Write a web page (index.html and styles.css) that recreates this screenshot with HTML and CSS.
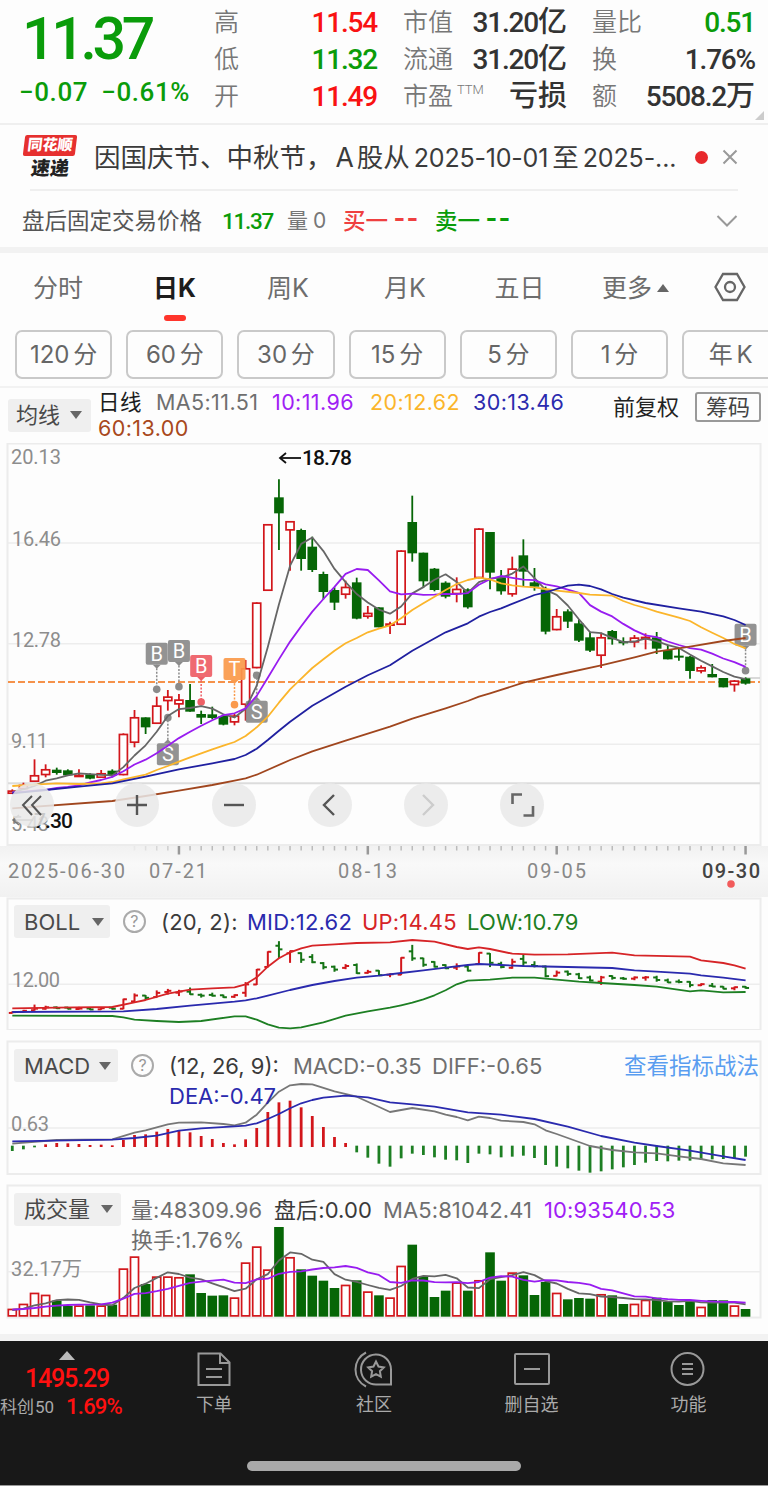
FILE: index.html
```html
<!DOCTYPE html>
<html lang="zh-CN">
<head>
  <meta charset="UTF-8" />
  <meta name="viewport" content="width=device-width, initial-scale=1.0" />
  <title>日K 11.37</title>
  <link rel="stylesheet" href="styles.css">
</head>
<body>
  <header class="quote">
    <div class="quote-main">
      <div class="price">11.37</div>
      <div class="change"><span>−0.07</span><span>−0.61%</span></div>
    </div>
    <dl class="stats stats-a">
      <dt>高</dt><dd class="up">11.54</dd>
      <dt>低</dt><dd class="down">11.32</dd>
      <dt>开</dt><dd class="up">11.49</dd>
    </dl>
    <dl class="stats stats-b">
      <dt>市值</dt><dd>31.20<b>亿</b></dd>
      <dt>流通</dt><dd>31.20<b>亿</b></dd>
      <dt>市盈<sup>TTM</sup></dt><dd><b>亏损</b></dd>
    </dl>
    <dl class="stats stats-c">
      <dt>量比</dt><dd class="down">0.51</dd>
      <dt>换</dt><dd>1.76%</dd>
      <dt>额</dt><dd>5508.2<b>万</b></dd>
    </dl>
    <i class="corner"></i>
  </header>

  <div class="notice">
    <div class="logo"><span class="logo-top">同花顺</span><span class="logo-bottom">速递</span></div>
    <p>因国庆节、中秋节，<span class="n-a">A</span>股从<span class="n-d">2025-10-01</span>至<span class="n-e">2025-...</span></p>
    <i class="dot"></i>
    <svg class="close" viewBox="0 0 16 16"><path d="M1.5 1.5l13 13M14.5 1.5l-13 13" /></svg>
  </div>

  <div class="after-hours">
    <span class="ah-label">盘后固定交易价格</span>
    <span class="ah-price">11.37</span>
    <span class="ah-vol">量 0</span>
    <span class="ah-buy">买一 <em>--</em></span>
    <span class="ah-sell">卖一 <em>--</em></span>
    <svg class="chevron" viewBox="0 0 22 14"><path d="M1.5 2l9.5 9.5L20.500 2" /></svg>
  </div>

  <nav class="tabs">
    <a>分时</a>
    <a class="active">日K</a>
    <a>周K</a>
    <a>月K</a>
    <a>五日</a>
    <a class="more">更多<i class="tri-up"></i></a>
    <svg class="gear" viewBox="0 0 32 30"><path d="M9 2h14l7.500 13L23 28H9L1.500 15z" /><circle cx="16" cy="15" r="5" /></svg>
  </nav>

  <div class="periods">
    <span>120 分</span><span>60 分</span><span>30 分</span><span>15 分</span><span>5 分</span><span>1 分</span><span class="year">年 K</span>
  </div>

  <div class="ma-bar">
    <button class="picker">均线<i class="tri-down"></i></button>
    <div class="ma-values">
      <span class="c-black">日线</span>
      <span class="c-gray">MA5:11.51</span>
      <span class="c-purple">10:11.96</span>
      <span class="c-yellow">20:12.62</span>
      <span class="c-blue">30:13.46</span>
      <span class="c-brown">60:13.00</span>
    </div>
    <span class="adjust">前复权</span>
    <button class="chips">筹码</button>
  </div>

  <main>
    <section class="kline">
      <svg id="kline" viewBox="0 3 768 403"></svg>
      <div class="tools">
        <button><svg viewBox="0 0 44 44"><path class="thin" d="M22 13L13 22l9 10M31 13L22 22l9 10" /></svg></button>
        <button><svg viewBox="0 0 44 44"><path d="M12 22h20M22 12v20" /></svg></button>
        <button><svg viewBox="0 0 44 44"><path d="M12 22h20" /></svg></button>
        <button><svg viewBox="0 0 44 44"><path d="M26 12L16 22l10 10" /></svg></button>
        <button class="disabled"><svg viewBox="0 0 44 44"><path d="M19 12l10 10-10 10" /></svg></button>
        <button><svg viewBox="0 0 44 44"><path class="thick" d="M12.500 21v-9.500H22M33 23v9.500H23.500" /></svg></button>
      </div>
    </section>
    <svg id="axis" viewBox="0 406 768 51"></svg>

    <section class="panel boll">
      <svg id="boll" class="plot" viewBox="0 0 768 135"></svg>
      <div class="legend">
        <button class="picker">BOLL<i class="tri-down"></i></button>
        <i class="help">?</i>
        <span class="c-dark">(20, 2):</span>
        <span class="c-blue">MID:12.62</span>
        <span class="c-red">UP:14.45</span>
        <span class="c-green">LOW:10.79</span>
      </div>
    </section>

    <section class="panel macd">
      <svg id="macd" class="plot" viewBox="0 0 768 135"></svg>
      <div class="legend">
        <button class="picker">MACD<i class="tri-down"></i></button>
        <i class="help">?</i>
        <span class="c-dark">(12, 26, 9):</span>
        <span class="c-gray">MACD:-0.35</span>
        <span class="c-gray">DIFF:-0.65</span>
        <a>查看指标战法</a>
        <span class="c-blue dea">DEA:-0.47</span>
      </div>
    </section>

    <section class="panel volume">
      <svg id="volume" class="plot" viewBox="0 4 768 135"></svg>
      <div class="legend">
        <button class="picker">成交量<i class="tri-down"></i></button>
        <span class="c-gray">量:48309.96</span>
        <span class="c-dark">盘后:0.00</span>
        <span class="c-gray">MA5:81042.41</span>
        <span class="c-purple">10:93540.53</span>
        <span class="c-gray turnover">换手:1.76%</span>
      </div>
    </section>
  </main>

  <footer>
    <div class="index">
      <i class="tri-up"></i>
      <strong>1495.29</strong>
      <div><span>科创<small>50</small></span><b>1.69%</b></div>
    </div>
    <a>
      <svg viewBox="0 0 40 40"><path d="M4.500 4.500h22l9 9V36h-31zM26 4.500V14h9.500M12 20h16M12 28h16" /></svg>
      下单
    </a>
    <a>
      <svg viewBox="0 0 40 40"><path d="M37 35.500H23A15 15 0 1 1 37 20.500zM12 3.500a19 19 0 0 0 0 34M22 12.500l2.500 5 5.300.9-3.900 3.800.9 5.500-4.800-2.600-4.800 2.600.9-5.500-3.900-3.800 5.300-.9z" /></svg>
      社区
    </a>
    <a>
      <svg viewBox="0 0 40 40"><rect x="3" y="5" width="34" height="30" rx="1" /><path d="M12 20h16" /></svg>
      删自选
    </a>
    <a>
      <svg viewBox="0 0 40 40"><circle cx="18.500" cy="20" r="16" /><path d="M13 15h11M13 20h11M13 25h11" /></svg>
      功能
    </a>
    <i class="home-bar"></i>
  </footer>

  <script src="charts.js"></script>
</body>
</html>
```
FILE: styles.css
```css
* {
  box-sizing: border-box;
}
body {
  margin: 0;
  width: 768px;
  height: 1486px;
  overflow: hidden;
  background: #fdfdfd;
  color: #333;
  font-family: Inter, "Noto Sans CJK SC", sans-serif;
}
i, em {
  font-style: normal;
}
button {
  border: 0;
  padding: 0;
  margin: 0;
  font: inherit;
  color: inherit;
}
svg {
  display: block;
  fill: none;
}
.up { color: #f91212; }
.down { color: #0a9c0a; }
.c-black { color: #1c1c1c; }
.c-dark { color: #3a3a3a; }
.c-gray { color: #6f6f6f; }
.c-purple { color: #a020f5; }
.c-yellow { color: #fbb52b; }
.c-blue { color: #2a2aae; }
.c-brown { color: #a8481c; }
.c-red { color: #d62427; }
.c-green { color: #1d7f23; }

/* quote header */
.quote {
  position: relative;
  display: flex;
  height: 125px;
  border-bottom: 2px solid #efefef;
  font-family: Roboto, "Noto Sans CJK SC", sans-serif;
  font-kerning: none;
}
.quote-main {
  width: 215px;
  color: #0a9c0a;
}
.price {
  height: 77px;
  padding-left: 22px;
  font-size: 59px;
  line-height: 77px;
  font-weight: 500;
  letter-spacing: -4.300px;
}
.change {
  display: flex;
  gap: 13px;
  padding-left: 19px;
  font-size: 26px;
  line-height: 31px;
  font-weight: 500;
  letter-spacing: 0.6px;
}
.stats {
  display: grid;
  grid-template-columns: auto 1fr;
  grid-auto-rows: 37px;
  margin: 4px 0 0;
  line-height: 37px;
}
.stats dt {
  font-size: 25px;
  font-weight: 350;
  color: #777;
  white-space: nowrap;
}
.stats dd {
  margin: 0;
  text-align: right;
  font-size: 28px;
  font-weight: 500;
  letter-spacing: -1.2px;
  white-space: nowrap;
}
.stats b {
  font-size: 29px;
  font-weight: 500;
  letter-spacing: 0;
}
.stats sup {
  display: inline-block;
  margin: 0 -30px 0 4px;
  font-size: 13px;
  line-height: 13px;
  vertical-align: 11px;
}
.stats-a { width: 163px; margin-left: -1px; }
.stats-b { width: 164px; margin-left: 26px; }
.stats-c { width: 163px; margin-left: 25px; }
.corner {
  position: absolute;
  right: 4px;
  bottom: 3px;
  border-left: 9px solid transparent;
  border-bottom: 9px solid #ccc;
}

/* notice */
.notice {
  display: flex;
  align-items: center;
  height: 66px;
  margin: 0 30px;
  border-bottom: 2px solid #efefef;
}
.logo {
  display: flex;
  flex-direction: column;
  align-items: center;
  width: 54px;
  margin-left: -7px;
  font-weight: 900;
  line-height: 22px;
}
.logo span {
  transform: skewX(-7deg);
}
.logo-top {
  width: 52px;
  height: 21px;
  background: #e6302f;
  border-radius: 2px;
  color: #fff;
  font-size: 15px;
  line-height: 20px;
  text-align: center;
}
.logo-bottom {
  font-size: 19px;
  margin-top: 2px;
  color: #222;
}
.notice p {
  width: 590px;
  margin: -3px 0 0 17px;
  font-size: 26.500px;
  white-space: nowrap;
  color: #3b3b3b;
}
.n-a { margin: 0 3px; }
.n-d { margin: 0 4px; font-size: 25px; letter-spacing: -0.2px; }
.n-e { margin-left: 4px; font-size: 25px; letter-spacing: -0.1px; }
.dot {
  width: 13px;
  height: 13px;
  margin-left: 11px;
  border-radius: 50%;
  background: #e8292c;
}
.close {
  flex: none;
  width: 16px;
  margin-left: 14px;
  stroke: #999;
  stroke-width: 2;
}

.after-hours {
  display: grid;
  grid-template-columns: 200px 65px 56px 92px 281px 22px;
  align-items: center;
  height: 56px;
  padding: 3px 22px 0 22px;
  font-size: 22.500px;
  line-height: 30px;
  white-space: nowrap;
}
.ah-label { color: #555; }
.ah-price { color: #0a9c0a; font-family: Roboto, sans-serif; font-weight: 500; font-kerning: none; letter-spacing: -1.3px; }
.ah-vol { color: #777; word-spacing: -1px; font-size: 21px; }
.ah-buy, .ah-sell { font-weight: 500; }
.ah-buy { color: #ef4040; }
.ah-sell { color: #0a9c0a; }
.after-hours em { letter-spacing: 2px; font-family: Roboto, sans-serif; font-size: 32px; line-height: 26px; }
.chevron {
  width: 22px;
  stroke: #999;
  stroke-width: 2;
}

/* period tabs */
.tabs {
  display: grid;
  grid-template-columns: 116px 117px 110px 124px 105px 127px 1fr;
  height: 83px;
  border-top: 6px solid #f2f2f2;
  font-size: 25px;
  line-height: 70px;
  text-align: center;
  color: #6d6d6d;
}
.tabs a {
  display: flex;
  flex-direction: column;
  align-items: center;
}
.tabs .active {
  color: #1d1d1d;
  font-weight: 700;
}
.tabs .active::after {
  content: "";
  width: 22px;
  height: 6px;
  margin-top: -8px;
  border-radius: 3px;
  background: #ff352c;
}
.tabs .more {
  flex-direction: row;
  justify-content: center;
  gap: 5px;
  height: 70px;
  color: #6d6d6d;
}
.tri-up {
  border: 6px solid transparent;
  border-top: 0;
  border-bottom: 8px solid #666;
}
.tri-down {
  display: inline-block;
  border: 6px solid transparent;
  border-bottom: 0;
  border-top: 8px solid #666;
}
.gear {
  width: 32px;
  margin: 19px 0 0 15px;
  stroke: #666;
  stroke-width: 2.300;
}
.periods {
  display: flex;
  gap: 14px;
  height: 58px;
  padding-left: 15px;
  border-bottom: 2px solid #f2f2f2;
  overflow: hidden;
}
.periods span {
  flex: none;
  width: 97.200px;
  height: 49px;
  border: 2px solid #c9c9c9;
  border-radius: 7px;
  font-size: 24px;
  line-height: 45px;
  text-align: center;
  word-spacing: -3px;
  color: #666;
}

/* moving averages */
.ma-bar {
  display: flex;
  height: 55px;
}
.picker {
  display: flex;
  align-items: center;
  height: 33px;
  padding: 0 8px;
  border-radius: 3px;
  background: #efefef;
  color: #4a4a4a;
  line-height: 30px;
  white-space: nowrap;
}
.ma-bar .picker {
  width: 83px;
  margin: 11px 7px 0 8px;
  font-size: 22px;
  line-height: 28px;
  gap: 10px;
  padding-bottom: 2px;
}
.ma-values {
  display: grid;
  grid-template-columns: 58px 116px 98px 103px 1fr;
  grid-auto-rows: 26px;
  width: 515px;
  padding-top: 2px;
  font-size: 21.500px;
  line-height: 25px;
  letter-spacing: 0.4px;
  white-space: nowrap;
}
.adjust {
  width: 82px;
  font-size: 22px;
  line-height: 38px;
  color: #222;
}
.chips {
  width: 66px;
  height: 30px;
  margin-top: 4px;
  border: 2px solid #999;
  border-radius: 3px;
  background: none;
  font-size: 22px;
  line-height: 26px;
  color: #444;
}

/* charts */
.kline, .panel {
  display: grid;
}
.kline > *, .panel > * {
  grid-area: 1 / 1;
}
.kline {
  height: 403px;
}
.tools {
  align-self: end;
  display: flex;
  gap: 52.300px;
  padding: 0 0 19px 10px;
}
.tools button {
  width: 44px;
  height: 44px;
  border-radius: 50%;
  background: rgba(233, 233, 233, 0.85);
}
.tools button:first-child {
  margin-right: 9px;
}
.tools path {
  stroke: #555;
  stroke-width: 2.400;
}
.tools .thin { stroke-width: 2; }
.tools .thick { stroke-width: 2.600; stroke: #666; }
.tools .disabled path { stroke: #ccc; }
#axis {
  height: 51px;
  background: linear-gradient(#f1f1f1, #f9f9f9 35%, #f1f1f1);
}
svg text {
  font-family: Roboto, "Noto Sans CJK SC", sans-serif;
}
.panel {
  height: 144px;
  align-items: start;
}
.panel.boll { margin-top: -2px; height: 145px; }
.panel.volume { height: 150px; }
.legend {
  display: grid;
  align-items: center;
  padding: 10px 0 0 14px;
  grid-template-rows: 33px;
  font-size: 22px;
  line-height: 30px;
  letter-spacing: 0.1px;
  white-space: nowrap;
}
.boll .legend { grid-template-columns: 109px 38px 86px 115px 105px 1fr; letter-spacing: 0.2px; }
.macd .legend { grid-template-columns: 117px 38px 124px 139px 192px 1fr; padding-top: 9px; grid-auto-rows: 28px; letter-spacing: 0; }
.volume .legend { grid-template-columns: 117px 143px 109px 161px 1fr; grid-auto-rows: 27px; padding-top: 9px; }
.boll .picker { width: 96px; gap: 12px; letter-spacing: 0; }
.macd .picker { width: 104px; gap: 9px; }
.volume .picker { width: 107px; gap: 11px; }
.legend .picker { padding-left: 10px; }
.volume .picker { padding-bottom: 2px; }
.help {
  width: 23px;
  height: 23px;
  border: 2px solid #aaa;
  border-radius: 50%;
  color: #999;
  font-size: 16px;
  line-height: 19px;
  text-align: center;
}
.legend a { color: #5a9df0; font-size: 22.500px; }
.dea { grid-column: 3; }
.turnover { grid-column: 2; }

/* bottom bar */
footer {
  position: relative;
  display: grid;
  grid-template-columns: 134px 160px 160px 155px 159px;
  height: 152px;
  padding-top: 7px;
  border-top: 7px solid #f2f2f2;
  border-bottom: 1px solid #999;
  background: #181818;
  color: #aaa;
}
footer a {
  display: flex;
  flex-direction: column;
  align-items: center;
  font-size: 18px;
  line-height: 32px;
}
footer a svg {
  width: 40px;
  height: 40px;
  margin-top: 1px;
  stroke: #999;
  stroke-width: 2;
}
.index {
  display: flex;
  flex-direction: column;
  align-items: center;
  font-family: Roboto, "Noto Sans CJK SC", sans-serif;
  font-kerning: none;
}
.index .tri-up {
  border-width: 0 8px 9px;
  border-bottom-color: #bbb;
  margin-top: 3px;
}
.index strong {
  margin-top: 4px;
  color: #ff1010;
  font-size: 25px;
  line-height: 30px;
  font-weight: 500;
  letter-spacing: -1.2px;
}
.index div {
  display: flex;
  width: 134px;
  gap: 12px;
  font-size: 17px;
  line-height: 26px;
}
.index small { font-size: 17px; margin-left: 1px; }
.index b {
  color: #ff1010;
  font-size: 22px;
  font-weight: 500;
  letter-spacing: -0.8px;
}
.home-bar {
  position: absolute;
  left: 247px;
  bottom: 14px;
  width: 274px;
  height: 10px;
  border-radius: 5px;
  background: #a9a9a9;
}
```
FILE: charts.js
```js
// y values are in thirds of a pixel
const RED = '#d2161b';
const GREEN = '#066606';
const STEP = 11.11;
const X = i => 12.3 + STEP * i;
const Y = v => v / 3;

// [up/down, high, body top, body bottom, low]
const candles = [
  ['r',1048,1051,1062,1062],['r',1028,1034,1048,1048],['r',958,1005,1026,1026],['r',973,987,1006,1012],
  ['g',983,989,999,1004],['g',988,991,1006,1008],['r',988,1004,1010,1010],['g',1000,1003,1016,1018],
  ['r',990,999,1014,1014],['g',988,992,1006,1012],['r',880,881,1006,1006],['r',810,831,909,922],
  ['g',832,832,862,882],['r',770,796,852,852],['r',750,769,784,812],['r',762,778,794,832],
  ['g',732,780,815,815],['g',812,822,833,852],['g',800,823,834,838],['g',826,828,854,856],
  ['r',822,826,848,856],['r',660,684,795,842],['r',487,487,685,685],['r',252,252,453,453],
  ['g',118,172,220,330],['r',243,243,272,392],['g',266,270,357,392],['g',290,320,390,396],
  ['g',395,402,456,478],['g',442,450,488,510],['r',422,440,465,476],['g',413,427,536,538],
  ['r',498,518,531,536],['g',502,502,562,562],['r',545,550,556,582],['r',331,331,555,555],
  ['g',167,246,340,365],['g',338,338,424,444],['g',384,386,450,454],['g',424,428,470,475],
  ['r',412,446,463,487],['g',445,448,502,506],['r',265,265,415,415],['g',276,276,398,448],
  ['g',390,412,454,464],['r',350,385,464,470],['g',298,346,395,438],['g',384,427,440,452],
  ['g',440,448,575,583],['r',507,528,571,571],['g',508,514,545,564],['g',538,550,602,606],
  ['g',575,592,632,636],['r',578,591,648,684],['g',570,573,598,614],['g',592,603,610,616],
  ['r',585,592,608,622],['r',580,590,596,628],['g',576,592,626,642],['g',614,630,658,658],
  ['g',625,647,652,662],['g',648,650,693,716],['r',676,681,695,700],['g',672,702,712,712],
  ['g',714,714,742,742],['r',720,721,736,755],['g',712,715,731,734]
];

const macdBars = [333,328,322,313,309,310,312,315,314,316,300,285,283,275,267,270,277,288,297,309,313,298,
  264,216,187,182,202,228,261,291,309,337,353,371,380,355,341,345,352,359,361,369,341,343,352,350,347,354,
  375,380,385,392,398,394,388,382,375,368,363,364,362,362,360,358,357,355,350];

const volumes = [386,371,338,344,362,378,376,376,376,374,265,229,312,289,289,291,283,339,347,346,352,247,199,
  268,141,231,268,287,302,324,314,301,334,346,352,257,194,290,351,332,307,332,300,217,302,277,286,345,306,
  338,358,354,356,342,346,372,371,359,353,366,375,360,380,360,361,376,387];

// moving average over n values, `seed` fills the days before the first full window
function average(values, n, seed) {
  return values.map((v, i) => {
    if (i < n - 1) return [i, seed[i]];
    return [i, values.slice(i - n + 1, i + 1).reduce((a, b) => a + b) / n];
  });
}

function line(points, color, width = 1.8) {
  const pts = points.map(p => X(p[0]).toFixed(1) + ',' + Y(p[1]).toFixed(1)).join(' ');
  return `<polyline points="${pts}" stroke="${color}" stroke-width="${width}" stroke-linejoin="round"/>`;
}

function seg(x1, y1, x2, y2, color, width = 1.5, extra = '') {
  return `<line x1="${x1}" y1="${y1}" x2="${x2}" y2="${y2}" stroke="${color}" stroke-width="${width}" ${extra}/>`;
}

function label(x, y, text, length, color = '#8d8d8d', size = 20, extra = '') {
  return `<text x="${x}" y="${y}" font-size="${size}" textLength="${length}" fill="${color}" ${extra}>${text}</text>`;
}

function frame(top, bottom) {
  return `<rect x="7.500" y="${top}" width="753" height="${bottom - top}" stroke="#ececec" stroke-width="2"/>`;
}

function bar(i, color, top, bottom) {
  const x = X(i);
  if (color === 'g') {
    return `<rect x="${x - 4.800}" y="${Y(top)}" width="9.600" height="${Math.max(Y(bottom - top), 2)}" fill="${GREEN}"/>`;
  }
  return `<rect x="${x - 4}" y="${Y(top) + 0.8}" width="8" height="${Math.max(Y(bottom - top) - 1.600, 1)}" fill="#fff" stroke="${RED}" stroke-width="1.700"/>`;
}

// flag with a letter, joined to its day by a dotted line
function flag(i, top, dotY, letter, color) {
  const x = X(i);
  const t = Y(top);
  const d = Y(dotY);
  const edge = d > t ? t + 22 : t;
  const tip = d > t ? 4 : -4;
  return seg(x, edge, x, d, color, 1.5, 'stroke-dasharray="2 1.500"') +
    `<circle cx="${x}" cy="${d}" r="3.800" fill="${color}"/>` +
    `<rect x="${x - 11}" y="${t}" width="22" height="22" rx="2" fill="${color}" opacity=".93"/>` +
    `<path d="M${x - 4} ${edge}l4 ${tip}l4 ${-tip}z" fill="${color}"/>` +
    `<text x="${x}" y="${t + 18}" font-size="20" text-anchor="middle" fill="#fff">${letter}</text>`;
}

function drawKline() {
  let s = frame(3.5, 405);
  [309, 611, 913].forEach(v => s += seg(8, Y(v), 760, Y(v), '#ededed', 1.5));
  s += seg(8, Y(1030), 760, Y(1030), '#dcdcdc', 2);
  s += label(11, 24, '20.13', 50) + label(12, 106, '16.46', 49) + label(12, 207, '12.78', 49);
  s += label(11, 308, '9.11', 37) + label(11, 391, '5.43', 38);
  s += seg(8, Y(726), 760, Y(726), '#f5924a', 2, 'stroke-dasharray="7 3"');
  s += seg(745, Y(714), 760, Y(714), '#ccc');

  candles.forEach(([c, high, top, bottom, low], i) => {
    s += seg(X(i), Y(high), X(i), Y(low), c === 'g' ? GREEN : RED, 1.8) + bar(i, c, top, bottom);
  });

  s += flag(13, 608, 748, 'B', '#8b8b8b') + flag(15, 600, 740, 'B', '#8b8b8b');
  s += flag(17, 645, 786, 'B', '#ee5f66') + flag(20, 654, 794, 'T', '#fa9a4b');
  s += flag(14, 910, 833, 'S', '#8b8b8b') + flag(22, 782, 706, 'S', '#8b8b8b');
  s += flag(66, 551, 692, 'B', '#8b8b8b');

  const closes = candles.map(c => c[0] === 'g' ? c[3] : c[2]);
  s += line(average(closes, 5, [1056, 1048, 1038, 1022]), '#666');
  s += line(average(closes, 10, [1057, 1055, 1052, 1050, 1044, 1041, 1036, 1027, 1020]), '#981cf0');
  s += line([[0,1038],[2,1034],[4,1030],[6,1032],[8,1030],[9,1026],[10,1018],[12,1004],[13,990],[14,978],[15,965],
    [16,952],[17,940],[18,928],[19,917],[20,906],[21,888],[22,862],[23,830],[24,788],[25,748],[26,716],[27,684],[28,658],
    [29,632],[30,610],[31,594],[32,577],[33,566],[34,556],[35,535],[36,510],[37,490],[38,470],[39,450],[40,432],
    [41,420],[42,413],[43,418],[44,430],[45,436],[46,440],[47,442],[48,447],[49,452],[51,459],[52,464],[54,467],
    [55,483],[56,495],[57,504],[58,515],[60,533],[61,543],[62,562],[63,578],[64,594],[65,612],[66,625]], '#fbb52b');
  s += line([[0,1060],[3,1050],[6,1040],[9,1030],[12,1010],[15,988],[18,970],[20,957],[21,945],[22,926],[23,900],[24,872],
    [25,845],[27,797],[30,740],[32,706],[34,676],[36,632],[39,577],[41,550],[42,530],[43,516],[44,505],[47,465],
    [48,457],[49,447],[50,437],[51,434],[52,438],[53,448],[54,462],[55,473],[57,489],[60,505],[62,515],[64,529],
    [65,540],[66,555]], '#2020a0');
  s += line([[0,1105],[9,1083],[12,1068],[15,1052],[18,1035],[20,1022],[21,1015],[22,1004],[25,960],[27,934],[30,902],
    [34,860],[36,836],[39,805],[41,783],[42,770],[43,760],[46,728],[49,705],[53,676],[56,652],[58,635],[61,620],
    [64,603],[66,594]], '#a0461e');

  s += seg(280, 18, 301, 18, '#111', 1.8) + '<path d="M286 13l-6 5 6 5" stroke="#111" stroke-width="1.800"/>';
  s += label(302, 25, '18.78', 50, '#111', 21, 'font-weight="500"');
  s += seg(13, 380, 33, 380, '#777', 1.5) + '<path d="M19 375l-6 5 6 5" stroke="#777" stroke-width="1.500"/>';
  s += label(34, 388, '7.30', 39, '#111', 21, 'font-weight="500"');
  document.getElementById('kline').innerHTML = s;
}

function drawAxis() {
  let s = '';
  for (let i = 11; i < 67; i++) {
    const major = i % 17 === 15;
    const opacity = Math.min(1, (i - 10) / 6);
    s += seg(X(i), 406, X(i), major ? 414.500 : 410.500, major ? '#999' : '#bbb', major ? 2.5 : 1.5, `opacity="${major ? 1 : opacity}"`);
  }
  s += label(8, 437.5, '2025-06-30', 117, '#888') + label(149, 437.5, '07-21', 58, '#888');
  s += label(338, 437.5, '08-13', 59, '#888') + label(527, 437.5, '09-05', 59, '#888');
  s += label(702, 437.5, '09-30', 58, '#444', 20, 'font-weight="500"');
  s += '<circle cx="731" cy="444" r="3.800" fill="#f25b5b"/>';
  document.getElementById('axis').innerHTML = s;
}

function drawBoll() {
  const scale = v => Y(140 + (v - 118) * 0.2265);
  let s = frame(3.5, 135) + seg(8, Y(268), 760, Y(268), '#ededed') + label(12, 92, '12.00', 48);
  candles.forEach(([c, high, top, bottom, low], i) => {
    const color = c === 'g' ? '#157415' : '#d2161b';
    const open = scale(c === 'g' ? top : bottom);
    const close = scale(c === 'g' ? bottom : top);
    s += seg(X(i), scale(high) - 0.5, X(i), scale(low) + 0.5, color, 2);
    s += seg(X(i) - 3.5, open, X(i), open, color, 2) + seg(X(i), close, X(i) + 3.5, close, color, 2);
  });
  s += line([[0,340],[4,338],[9,336],[11,322],[12,315],[14,296],[16,284],[18,280],[20,277],[21,268],[22,247],[23,215],
    [24,190],[25,172],[26,160],[27,152],[29,148],[31,144],[34,142],[36,135],[38,140],[40,156],[41,162],[42,157],
    [43,162],[45,176],[47,179],[50,178],[54,173],[56,181],[61,185],[62,196],[64,204],[65,211],[66,221]], '#d62427');
  s += line([[0,351],[10,349],[13,342],[16,332],[20,320],[21,316],[22,310],[23,302],[25,285],[27,270],[29,258],[31,248],
    [33,242],[35,234],[37,226],[39,218],[41,210],[42,207],[44,210],[46,213],[50,216],[54,219],[56,226],[58,230],
    [61,236],[62,241],[64,248],[66,256]], '#2a2aae');
  s += line([[0,362],[9,363],[10,367],[11,374],[13,378],[15,381],[17,378],[20,364],[21,364],[22,374],[23,388],[24,398],
    [25,400],[26,397],[28,382],[30,362],[32,349],[34,338],[35,331],[36,323],[37,313],[38,301],[39,286],[40,268],
    [41,257],[43,254],[45,248],[47,248],[49,254],[51,260],[53,264],[56,270],[58,275],[61,289],[62,286],[64,292],
    [66,291]], '#1d7f23');
  document.getElementById('boll').innerHTML = s;
}

function drawMacd() {
  let s = frame(1.5, 134) + seg(8, Y(264), 760, Y(264), '#ededed') + label(11, 91, '0.63', 38);
  macdBars.forEach((v, i) => {
    const up = v < 318;
    s += seg(X(i), Y(up ? 321 : 317), X(i), Y(v), up ? '#d2161b' : '#1d7f23', 2.8);
  });
  s += line([[0,311],[4,300],[9,298],[11,278],[12,271],[14,253],[15,248],[17,247],[19,252],[20,256],[21,248],[22,224],
    [23,188],[24,155],[25,136],[26,132],[27,133],[29,154],[31,170],[32,185],[34,216],[36,204],[38,214],[39,224],
    [40,231],[41,241],[42,230],[43,234],[44,242],[46,246],[47,253],[48,271],[49,282],[52,318],[54,330],[56,337],
    [58,340],[60,349],[62,357],[64,370],[66,375]], '#777');
  s += line([[0,304],[9,299],[11,294],[13,287],[15,272],[17,265],[20,259],[21,257],[22,250],[23,237],[24,222],[25,205],
    [26,190],[27,180],[28,173],[30,167],[32,172],[34,187],[36,193],[38,200],[41,217],[44,224],[47,237],[50,260],
    [53,288],[56,308],[58,318],[61,332],[64,349],[66,360]], '#2a2aae');
  document.getElementById('macd').innerHTML = s;
}

function drawVolume() {
  let s = frame(5.5, 137.5) + seg(8, Y(275), 760, Y(275), '#ededed') + label(11, 95.5, '32.17万', 71);
  volumes.forEach((v, i) => s += bar(i, candles[i][0], v, 410));
  s += line(average(volumes, 5, [390, 386, 376, 370]), '#666');
  s += line(average(volumes, 10, [389, 387, 384, 380, 377, 375, 374, 374, 373]), '#981cf0');
  document.getElementById('volume').innerHTML = s;
}

drawKline();
drawAxis();
drawBoll();
drawMacd();
drawVolume();
```
